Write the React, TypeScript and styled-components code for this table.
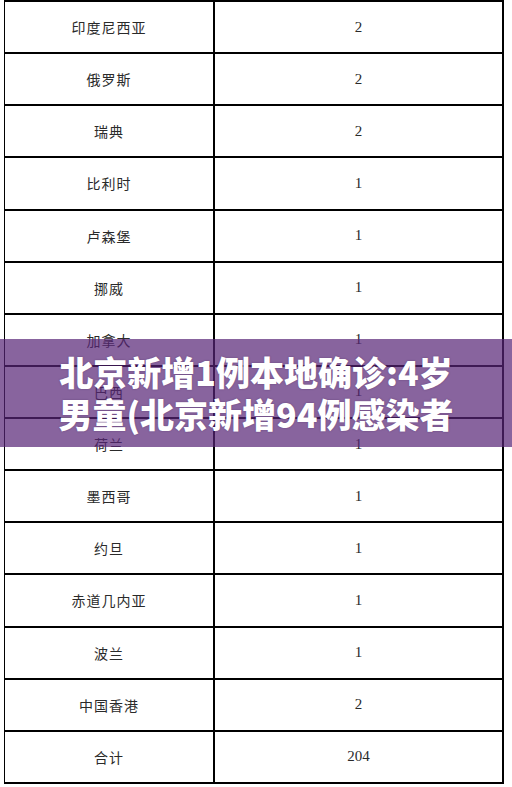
import React from "react";
import styled, { createGlobalStyle } from "styled-components";

const Global = createGlobalStyle`
  html, body { margin: 0; padding: 0; background: #fff; }
  body { width: 512px; height: 787px; overflow: hidden; }
`;

const Page = styled.div`
  position: relative;
  width: 512px;
  height: 787px;
  padding-left: 4px;
  box-sizing: border-box;
`;

const Table = styled.div`
  display: grid;
  grid-template-columns: 208px 287px;
  grid-auto-rows: 50.13px;
  gap: 2px;
  padding: 2px 2px 2px 1px;
  width: 500px;
  box-sizing: border-box;
  background: #000;
`;

const Cell = styled.div<{ $num?: boolean }>`
  background: #fff;
  display: flex;
  align-items: center;
  justify-content: center;
  color: #2a2a2a;
  font-family: ${(p) =>
    p.$num
      ? `"Liberation Serif", "Noto Sans CJK SC", serif`
      : `"Noto Sans CJK SC", sans-serif`};
  font-size: ${(p) => (p.$num ? "15px" : "14px")};
  letter-spacing: ${(p) => (p.$num ? "0" : "1px")};
  font-weight: 400;
`;

const Band = styled.div`
  position: absolute;
  left: 0;
  top: 339px;
  width: 512px;
  height: 108px;
  background: rgba(87, 36, 119, 0.71);
  display: flex;
  flex-direction: column;
  align-items: center;
  justify-content: center;
`;

const Title = styled.div`
  color: #fff;
  font-family: "Noto Sans CJK SC", sans-serif;
  font-weight: 900;
  font-size: 34px;
  line-height: 42px;
  white-space: nowrap;
  text-shadow: 0 0 2px rgba(40, 10, 60, 0.35);
`;

const rows: [string, string][] = [
  ["印度尼西亚", "2"],
  ["俄罗斯", "2"],
  ["瑞典", "2"],
  ["比利时", "1"],
  ["卢森堡", "1"],
  ["挪威", "1"],
  ["加拿大", "1"],
  ["巴西", "1"],
  ["荷兰", "1"],
  ["墨西哥", "1"],
  ["约旦", "1"],
  ["赤道几内亚", "1"],
  ["波兰", "1"],
  ["中国香港", "2"],
  ["合计", "204"],
];

export default function App() {
  return (
    <Page>
      <Global />
      <Table>
        {rows.map(([c, n]) => (
          <React.Fragment key={c}>
            <Cell>{c}</Cell>
            <Cell $num>{n}</Cell>
          </React.Fragment>
        ))}
      </Table>
      <Band>
        <Title>北京新增1例本地确诊:4岁</Title>
        <Title>男童(北京新增94例感染者</Title>
      </Band>
    </Page>
  );
}
